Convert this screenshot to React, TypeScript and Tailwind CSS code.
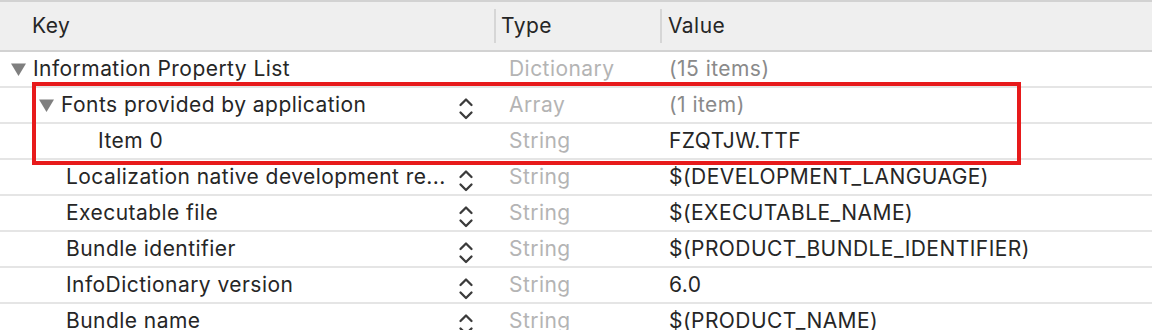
import React from "react";

type Row = {
  key: string;
  indent: number;
  triangle?: boolean;
  stepper?: boolean;
  type: string;
  value: string;
  valueGray?: boolean;
};

const rows: Row[] = [
  { key: "Information Property List", indent: 11, triangle: true, type: "Dictionary", value: "(15 items)", valueGray: true },
  { key: "Fonts provided by application", indent: 39, triangle: true, stepper: true, type: "Array", value: "(1 item)", valueGray: true },
  { key: "Item 0", indent: 98, type: "String", value: "FZQTJW.TTF" },
  { key: "Localization native development re...", indent: 66, stepper: true, type: "String", value: "$(DEVELOPMENT_LANGUAGE)" },
  { key: "Executable file", indent: 66, stepper: true, type: "String", value: "$(EXECUTABLE_NAME)" },
  { key: "Bundle identifier", indent: 66, stepper: true, type: "String", value: "$(PRODUCT_BUNDLE_IDENTIFIER)" },
  { key: "InfoDictionary version", indent: 66, stepper: true, type: "String", value: "6.0" },
  { key: "Bundle name", indent: 66, stepper: true, type: "String", value: "$(PRODUCT_NAME)" },
];

function Triangle() {
  return (
    <svg width="15" height="13" viewBox="0 0 15 13" className="mr-[7px] shrink-0">
      <polygon points="0,0.5 15,0.5 7.5,13" fill="#7f7f7f" />
    </svg>
  );
}

function Stepper() {
  return (
    <svg width="16" height="24" viewBox="0 0 16 24" className="shrink-0 mt-[7px]">
      <polyline points="2.5,8 8,2.5 13.5,8" fill="none" stroke="#3b3b3b" strokeWidth="2.3" strokeLinecap="round" strokeLinejoin="round" />
      <polyline points="2.5,15.5 8,21 13.5,15.5" fill="none" stroke="#3b3b3b" strokeWidth="2.3" strokeLinecap="round" strokeLinejoin="round" />
    </svg>
  );
}

export default function App() {
  return (
    <div
      className="relative w-[1152px] h-[330px] overflow-hidden bg-white text-[21px] tracking-[0.45px] text-[#262626]"
      style={{ fontFamily: "Inter, 'Liberation Sans', sans-serif" }}
    >
      <div className="grid grid-cols-[494px_166px_1fr] h-[52px] border-t-2 border-b-2 border-[#d2d2d2] bg-[#efefef]">
        <div className="flex items-center pl-[32px]">Key</div>
        <div className="flex items-center">
          <div className="w-[2px] h-[34px] bg-[#d6d6d6] mr-[5px]" />
          <span>Type</span>
        </div>
        <div className="flex items-center">
          <div className="w-[2px] h-[34px] bg-[#d6d6d6] mr-[6px]" />
          <span>Value</span>
        </div>
      </div>
      {rows.map((r, i) => (
        <div key={i} className="grid grid-cols-[494px_166px_1fr] h-[36px] border-b-2 border-[#e5e5e5]">
          <div className="flex items-center pr-[20px]" style={{ paddingLeft: r.indent }}>
            {r.triangle && <Triangle />}
            <span className="flex-1 whitespace-nowrap">{r.key}</span>
            {r.stepper && <Stepper />}
          </div>
          <div className="flex items-center pl-[15px] text-[#b4b4b4]">{r.type}</div>
          <div className={`flex items-center pl-[9px] ${r.valueGray ? "text-[#8a8a8a]" : ""}`}>{r.value}</div>
        </div>
      ))}
      <div className="absolute left-[32px] top-[82px] w-[989px] h-[83px] border-4 border-[#e71a1b]" />
    </div>
  );
}
